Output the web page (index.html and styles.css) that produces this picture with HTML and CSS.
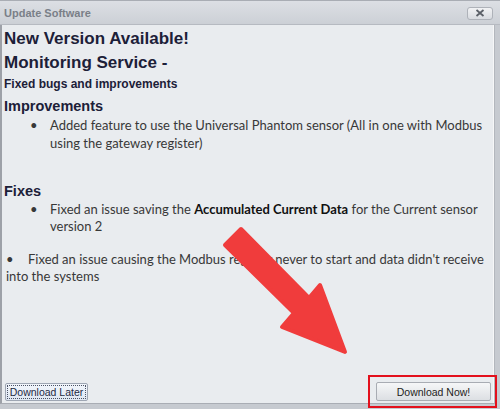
FILE: index.html
```html
<!DOCTYPE html>
<html>
<head>
<meta charset="utf-8">
<link rel="stylesheet" href="styles.css">
</head>
<body>
<div class="window">
  <div class="titlebar">
    <span class="title">Update Software</span>
    <span class="close"><svg width="10" height="8" viewBox="0 0 10 8"><path d="M1.5 1 L8.5 7 M8.5 1 L1.5 7" stroke="#5a5f67" stroke-width="1.8" fill="none"/></svg></span>
  </div>
  <div class="panel">
    <div class="content">
      <h1 class="h1 first">New Version Available!</h1>
      <h1 class="h1">Monitoring Service -</h1>
      <h3 class="h3">Fixed bugs and improvements</h3>
      <h2 class="h2">Improvements</h2>
      <div class="item item-ind lh18">
        <span class="bullet">&bull;</span>
        <span class="txt">Added feature to use the Universal Phantom sensor (All in one with Modbus<br>using the gateway register)</span>
      </div>
      <h2 class="h2 fixes">Fixes</h2>
      <div class="item item-ind lh17">
        <span class="bullet">&bull;</span>
        <span class="txt">Fixed an issue saving the <b>Accumulated Current Data</b> for the Current sensor<br>version 2</span>
      </div>
      <div class="item item-flat lh17">
        <span class="bullet b2">&bull;</span>
        <span class="txt">Fixed an issue causing the Modbus register never to start and data didn't receive<br><span class="back">into the systems</span></span>
      </div>
    </div>
    <div class="footer">
      <button class="btn later"><span class="focus">Download Later</span></button>
      <button class="btn now">Download Now!</button>
    </div>
  </div>
  <div class="redbox"></div>
  <svg class="arrow" width="500" height="409" viewBox="0 0 500 409">
    <polygon points="241,229 309,298 320,285 345,352 282,327 294,313 225,245" fill="#f03c3c" stroke="#f03c3c" stroke-width="4" stroke-linejoin="round"/>
  </svg>
</div>
</body>
</html>
```
FILE: styles.css
```css
* { box-sizing: border-box; }
html, body { margin: 0; padding: 0; }
body { width: 500px; height: 409px; overflow: hidden; background: #c6cad0; }
.window { position: relative; width: 500px; height: 409px; background: #c6cad0; border-top: 1px solid #a9adb4; }
.titlebar {
  height: 24px;
  display: flex; align-items: center; justify-content: space-between;
  padding: 0 7px 0 4px;
  background: linear-gradient(#dcdfe4, #ccd0d6);
  border-bottom: 1px solid #b6bac1;
}
.title { font-family: "Liberation Sans", Arial, sans-serif; font-weight: bold; font-size: 11px; color: #7a7f88; margin-top: 1px; }
.close {
  width: 26px; height: 13px; margin-top: 1px;
  display: flex; align-items: center; justify-content: center;
  border: 1px solid #aeb2b9; border-radius: 3px;
  background: linear-gradient(#f1f2f4, #d8dbe0);
}
.close svg { display: block; }
.panel {
  width: 495px; height: 379px;
  display: flex; flex-direction: column;
  background: #e9ecef;
  border-left: 2px solid #9da1a8;
  border-right: 1px solid #b3b7bd;
  border-bottom: 1px solid #a9adb4;
  box-shadow: inset -1px 0 0 #f6f7f8;
}
.content { flex: 1; }
.h1 { margin: 0; padding-left: 2px; font-family: "Liberation Sans", Arial, sans-serif; font-weight: bold; font-size: 17px; line-height: 24px; color: #1c2038; }
.h1.first { margin-top: 2px; }
.h3 { margin: 0; padding-left: 2px; font-family: "Liberation Sans", Arial, sans-serif; font-weight: bold; font-size: 12px; line-height: 18px; color: #1c2038; }
.h2 { margin: 3px 0 0; padding-left: 2px; font-family: "Liberation Sans", Arial, sans-serif; font-weight: bold; font-size: 14.5px; line-height: 20px; color: #1c2038; }
.h2.fixes { margin-top: 29px; }
.item { display: flex; font-family: Lato, "Open Sans", sans-serif; font-size: 13px; color: #383838; white-space: nowrap; }
.item b { color: #111; }
.lh18 { line-height: 18px; }
.lh17 { line-height: 17px; }
.item-ind { padding-left: 28px; }
.item-ind .bullet { width: 20px; }
.item-flat { padding-left: 4px; margin-top: 16px; }
.item-flat .bullet { width: 22px; }
.back { margin-left: -22px; }
.footer { display: flex; justify-content: space-between; align-items: flex-end; padding: 0 3px 2px 3px; }
.btn { font-family: "Liberation Sans", Arial, sans-serif; font-size: 10.5px; padding: 0; margin: 0; }
.later {
  width: 83px; height: 18px;
  border: 1px solid #9ea6b3; border-radius: 2px;
  background: linear-gradient(#f2f6fc, #dfe7f3);
  color: #1e2a44; padding: 1px;
}
.later .focus { display: block; height: 100%; border: 1px dotted #4a5264; line-height: 13px; }
.now {
  width: 115px; height: 19px;
  border: 1px solid #a8acb3; border-radius: 2px;
  background: linear-gradient(#f6f7f8, #dcdfe3);
  color: #1e1e22;
}
.redbox { position: absolute; left: 368px; top: 374px; width: 129px; height: 33px; border: 2px solid #e3101c; }
.arrow { position: absolute; left: 0; top: -1px; pointer-events: none; }
```
